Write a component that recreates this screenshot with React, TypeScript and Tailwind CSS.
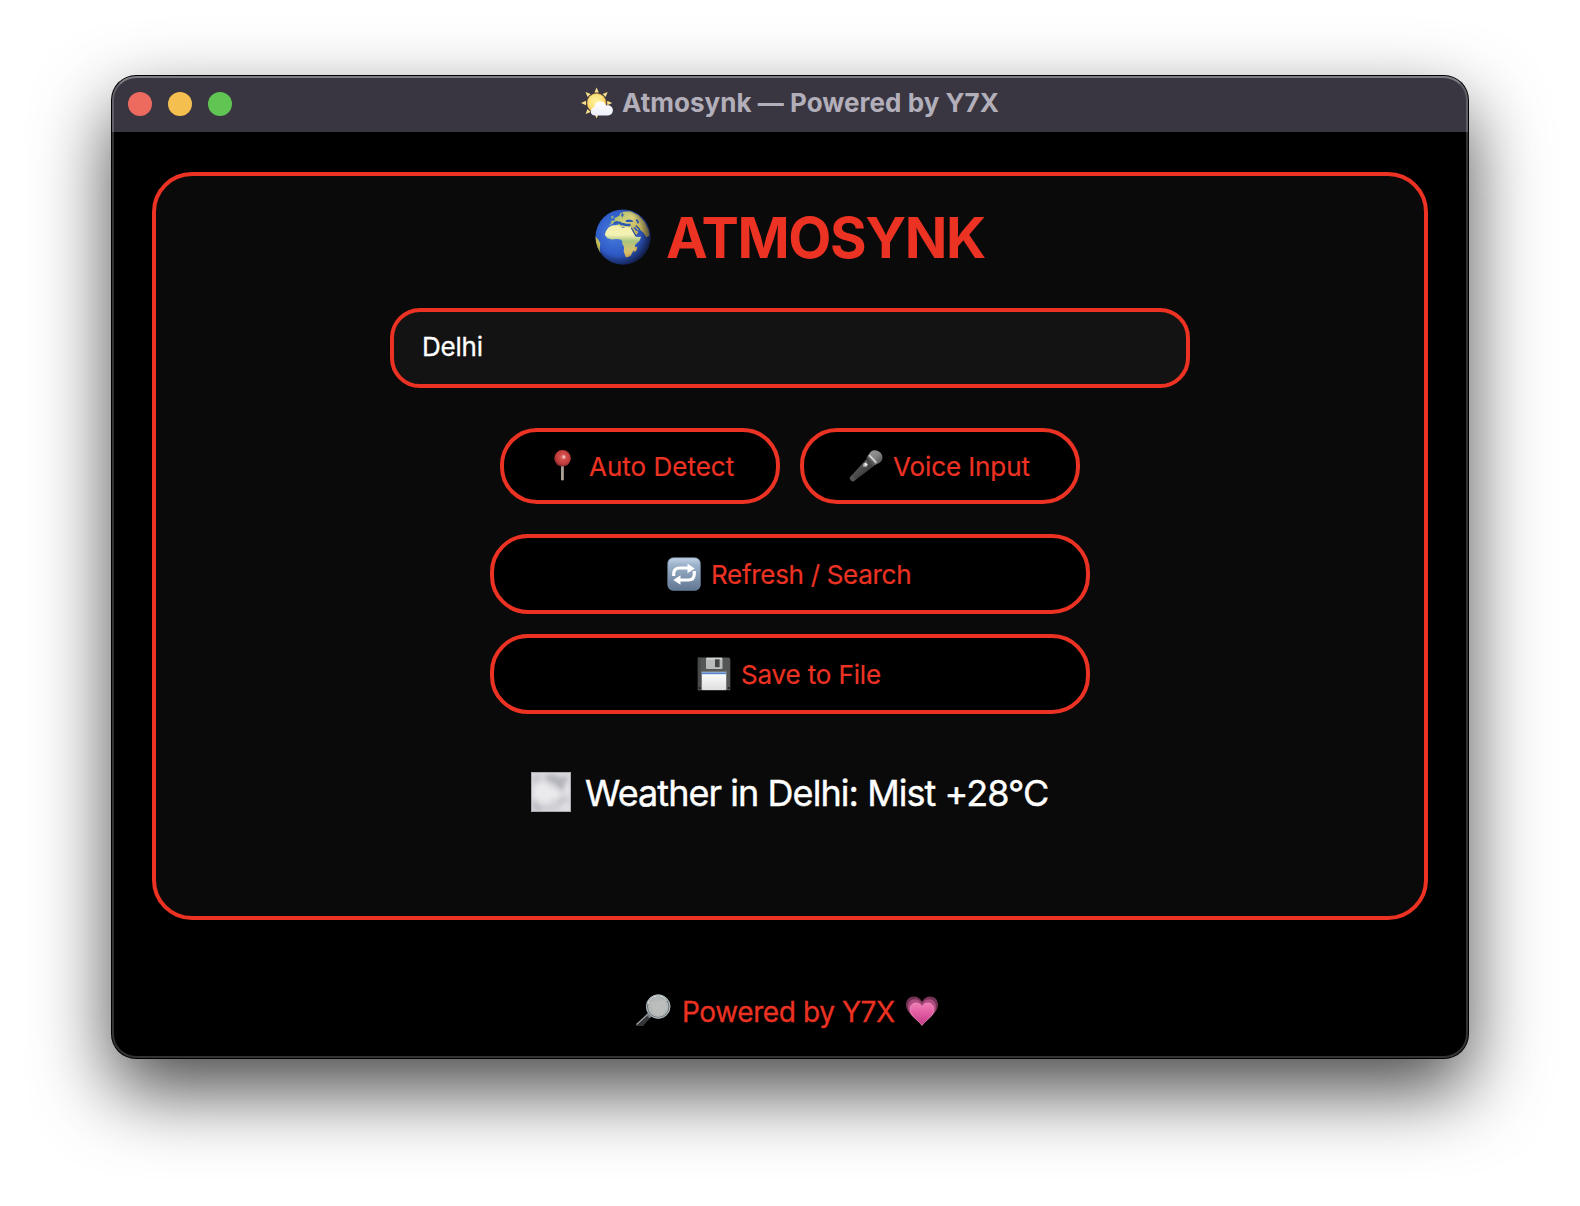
import React from "react";

function SunCloud() {
  return (
    <svg className="block h-[32px] w-[32px] shrink-0" viewBox="0 0 32 32">
      <defs>
        <radialGradient id="sun" cx=".45" cy=".4" r=".6">
          <stop offset="0" stopColor="#fff3a0" />
          <stop offset=".7" stopColor="#fbdf74" />
          <stop offset="1" stopColor="#f2b84c" />
        </radialGradient>
        <linearGradient id="cloud" x1="0" y1="0" x2="0" y2="1">
          <stop offset="0" stopColor="#ffffff" />
          <stop offset="1" stopColor="#eceffa" />
        </linearGradient>
      </defs>
      <g fill="#fae08a">
        {[0, 45, 90, 135, 180, 225, 270, 315].map((a) => (
          <path key={a} d="M15.6 .4 L17.8 5.400 L13.4 5.400 Z" transform={`rotate(${a} 15.6 16)`} />
        ))}
      </g>
      <circle cx="15.6" cy="16" r="9.500" fill="url(#sun)" stroke="#d99a35" strokeWidth=".5" />
      <path d="M14.2 28.4c-2.600 0-4.400-1.600-4.400-4 0-2.200 1.500-3.800 3.500-4.100.3-3.800 2.800-6 5.900-6 2.900 0 5 1.800 5.800 4.300.5-.2 1-.3 1.500-.3 3 0 5.400 2.100 5.400 4.900 0 3-2.100 5.200-5 5.200z" fill="url(#cloud)" />
    </svg>
  );
}

function Globe() {
  return (
    <svg className="block h-[56px] w-[56px] shrink-0" viewBox="0 0 56 56">
      <defs>
        <radialGradient id="sea" cx=".36" cy=".42" r=".68">
          <stop offset="0" stopColor="#4a80de" />
          <stop offset=".55" stopColor="#2f5bc8" />
          <stop offset=".85" stopColor="#26469e" />
          <stop offset="1" stopColor="#1c2d5c" />
        </radialGradient>
        <linearGradient id="africa" x1="0" y1="0" x2="0" y2="1">
          <stop offset="0" stopColor="#f3efaa" />
          <stop offset=".3" stopColor="#f4f2b4" />
          <stop offset=".5" stopColor="#aac47e" />
          <stop offset=".75" stopColor="#cfc272" />
          <stop offset="1" stopColor="#e2b258" />
        </linearGradient>
        <linearGradient id="eurasia" x1="0" y1="0" x2="1" y2=".6">
          <stop offset="0" stopColor="#92b468" />
          <stop offset=".5" stopColor="#d8d27a" />
          <stop offset="1" stopColor="#b9a34c" />
        </linearGradient>
        <radialGradient id="shade" cx=".42" cy=".44" r=".58">
          <stop offset=".7" stopColor="#0a1233" stopOpacity="0" />
          <stop offset="1" stopColor="#0a1233" stopOpacity=".6" />
        </radialGradient>
        <clipPath id="disc"><circle cx="28" cy="28" r="27.5" /></clipPath>
      </defs>
      <circle cx="28" cy="28" r="27.500" fill="url(#sea)" />
      <g clipPath="url(#disc)">
        <path fill="url(#eurasia)" d="M16 15.500l.3-3.700 3.700-.3-.5-2.500 3-1.200 2-1.300.5-2 3.500-1.800 7-.5 8 4 6 6.500 4 8 1 6-3 1.500-3.500-5-3.500-3-2 1-1.500-2.500-3-.8 2.500 3.300 3 1.500-1.800 3-4.700 2.500-1.700-2.500-3.300-5.500-.8-2-6-.3-2.500-1.500 1-1.700-3-.7-2.500 1-2.500-.8-1.700 2.300z" />
        <path fill="url(#africa)" d="M11 22l2.500-3.500 3.500-2 6.500-.5 1.500 1.700 3.200 1.200 2.300-1 6 .7 2.500 5 2.500 4.500 4.500-.4-1.200 3.700-4.800 4.600.2 4-2.600 2.900-1.700 3.600-3 1.800-2.200-.3-2-5.800.4-4.200-2-3.500.3-2.300-2-1.700-3.700-.5-5 .6-4.500-1.500-2.400-3.300z" />
        <path d="M18.500 14.700l3-1.500 3.500.6 1 1 4.500.9 5 .3" fill="none" stroke="#2c57b4" strokeWidth="2.400" />
        <path fill="#2f58b2" d="M30.500 11.500l2.500-.9 4 .5 1.500 1.600-3 .4-4.500-.1zM40.500 10.700l2-.5 1.600 3-1.200 1.800z" />
        <path d="M36.300 18.700l4.700 8.500M40.800 16.500l4 4" stroke="#294c99" strokeWidth="1.300" fill="none" />
        <path fill="#3560b8" d="M26 6l1.500-2.500 1.200 2.500-1.500 2.500z" />
        <path fill="#d7b752" d="M42.300 37.500l-.6 3.500-2.200 2.200-.7-2.200 1.400-2.700z" />
        <path fill="#c8c052" d="M0 27l3.500 4 1.800 3.500-.5 4.500.5 6L1 41z" />
        <path fill="#9db873" d="M16 8l1.500-1.500 1.200 1-1.500 2.500z" />
      </g>
      <circle cx="28" cy="28" r="27.5" fill="url(#shade)" />
    </svg>
  );
}

function Pin() {
  return (
    <svg className="block h-[34px] w-[34px] shrink-0" viewBox="0 0 34 34">
      <defs>
        <radialGradient id="pinHead" cx=".55" cy=".42" r=".55">
          <stop offset="0" stopColor="#ee9890" />
          <stop offset=".35" stopColor="#cf4c4a" />
          <stop offset=".8" stopColor="#bd3b3a" />
          <stop offset="1" stopColor="#832a2a" />
        </radialGradient>
      </defs>
      <rect x="15" y="16" width="3" height="15.500" rx="1.200" fill="#8f847c" />
      <rect x="15.600" y="16" width="1" height="15" fill="#c4bbb4" />
      <circle cx="16.500" cy="9.300" r="8.300" fill="url(#pinHead)" />
      <circle cx="18" cy="8" r="1.400" fill="#fbd6d0" opacity=".7" />
    </svg>
  );
}

function Mic() {
  return (
    <svg className="block h-[34px] w-[34px] shrink-0" viewBox="0 0 34 34">
      <defs>
        <linearGradient id="micHead" x1="0" y1="0" x2="1" y2="1">
          <stop offset="0" stopColor="#9a9a9a" />
          <stop offset=".5" stopColor="#858585" />
          <stop offset="1" stopColor="#4c4c4c" />
        </linearGradient>
        <linearGradient id="micBody" x1="0" y1="0" x2="1" y2="1">
          <stop offset="0" stopColor="#747474" />
          <stop offset=".5" stopColor="#4a4a4a" />
          <stop offset="1" stopColor="#222222" />
        </linearGradient>
      </defs>
      <path d="M17.500 10L.8 28.500c-.5 1.500 1.800 4.300 4 3.800L25 17z" fill="url(#micBody)" />
      <path d="M.9 28.600c-.6 1.600 1.900 4.400 3.900 3.700l2-1.700-4-4.300z" fill="#555" />
      <path d="M19.500 6.500c1.500-5 6-6.500 10-4.300 4.500 2.600 5 7.300 2.500 10.300-1.500 1.800-3.800 2.600-5.500 2.300z" fill="url(#micHead)" />
      <path d="M18.300 7.300l1.500-2L28.600 14l-2.400 2.300z" fill="#7d7d7d" />
      <path d="M20.300 6.300l7 7.200" stroke="#dedede" strokeWidth="1.600" />
      <path d="M17.300 9l1.300-1.800 7.600 8.600-2 1.500z" fill="#555" />
      <path d="M14.500 14.500l2.600-1.200 1.800 2.500-1.700 2.300-3.200-.7z" fill="#b9b9b9" />
      <path d="M16 14.500l1.700 1.600" stroke="#fff" strokeWidth="1.400" />
    </svg>
  );
}

function Repeat() {
  return (
    <svg className="block h-[34px] w-[34px] shrink-0" viewBox="0 0 34 34">
      <defs>
        <linearGradient id="tile" x1="0" y1="0" x2="0" y2="1">
          <stop offset="0" stopColor="#c3d3e6" />
          <stop offset=".2" stopColor="#9fb4cc" />
          <stop offset="1" stopColor="#617692" />
        </linearGradient>
      </defs>
      <rect x=".8" y=".8" width="32.500" height="32.500" rx="5.500" fill="url(#tile)" stroke="#7c93b0" strokeWidth=".7" />
      <path d="M6.700 19V17q0-6 6-6H22" fill="none" stroke="#fff" strokeWidth="3.100" />
      <path d="M20.500 6.800l7.300 4.600-7.300 4.800z" fill="#fff" />
      <path d="M27.300 14V17q0 6-6 6H13" fill="none" stroke="#fff" strokeWidth="3.100" />
      <path d="M13.500 18.200L6.300 23l7.200 4.800z" fill="#fff" />
    </svg>
  );
}

function Floppy() {
  return (
    <svg className="block h-[34px] w-[34px] shrink-0" viewBox="0 0 34 34">
      <defs>
        <linearGradient id="label" x1="0" y1="0" x2="0" y2="1">
          <stop offset="0" stopColor="#ffffff" />
          <stop offset="1" stopColor="#dedede" />
        </linearGradient>
      </defs>
      <path d="M.8.600H32l1.300 1.300v31.400H.8z" fill="#555656" />
      <path d="M.8.600h3v32.700h-3z" fill="#48494a" />
      <rect x="9" y=".8" width="16.500" height="11.300" rx="1" fill="#b9baba" />
      <rect x="9.500" y=".8" width="15.500" height="1.800" fill="#d2d3d3" />
      <rect x="18" y="2.300" width="4.600" height="7.800" fill="#444546" />
      <rect x="4" y="14" width="26" height="19.300" rx="1.300" fill="#77797b" />
      <rect x="5" y="15" width="24" height="18" rx=".8" fill="url(#label)" />
      <rect x="5" y="15.300" width="24" height="1.900" fill="#5583c8" />
      <path d="M1.700 30h1.600v2H1.700zM30.800 30h1.600v2h-1.600z" fill="#222" />
    </svg>
  );
}

function Mist() {
  return (
    <svg className="block h-[40px] w-[40px] shrink-0" viewBox="0 0 40 40">
      <defs>
        <filter id="soft" x="-30%" y="-30%" width="160%" height="160%"><feGaussianBlur stdDeviation="2" /></filter>
        <clipPath id="mistBox"><rect width="40" height="40" /></clipPath>
      </defs>
      <g clipPath="url(#mistBox)">
        <rect width="40" height="40" fill="#d9d9dd" />
        <g filter="url(#soft)">
          <path d="M14 3l10 0 6 3 5-2 2 3-4 5 1 6-5-1-5-5-5-2-4-3z" fill="#b4b4bc" />
          <path d="M1 5l5-3 5 3-3 4-7 2z" fill="#c9c9d0" />
          <path d="M2 17l5-5 7-1 6 5 8 3 0 7-8 1-4 5-7-3-6-5z" fill="#eaeaed" />
          <path d="M1 28l5 3 4 4 4-1-2 5H2z" fill="#bebec6" />
          <path d="M25 30l4-4 4 0 3-2 1 4-6 3-3 4z" fill="#c6c6cd" />
          <path d="M15 33l4 1 6-1 2 5H15z" fill="#cacad0" />
          <path d="M34 12l4 3v8l-4-3z" fill="#e8e8eb" />
          <path d="M31 35l5-3 3 5h-7z" fill="#e4e4e8" />
        </g>
        <rect x=".5" y=".5" width="39" height="39" fill="none" stroke="#8e8e96" opacity=".6" />
      </g>
    </svg>
  );
}

function Magnifier() {
  return (
    <svg className="block h-[32px] w-[36px] shrink-0" viewBox="0 0 36 32">
      <path d="M12.500 20L1 30.500V32H8l8-9z" fill="#33373a" />
      <path d="M12.500 20.500L1.500 30.600" stroke="#9b9fa3" strokeWidth="1.300" />
      <path d="M14.500 17l-3.500 3.800 3.600 3.400 3.900-3.500z" fill="#777c80" />
      <circle cx="23.200" cy="12.700" r="11.200" fill="#b4b7b7" stroke="#6f777b" strokeWidth="2" />
      <circle cx="23.200" cy="12.500" r="11.700" fill="none" stroke="#b5bcc0" strokeWidth="1" />
      <path d="M13 9.800a10.500 10.500 0 0 1 19-3" fill="none" stroke="#e6eaeb" strokeWidth="1" />
      <path d="M14 8.500l16-3 2 8-5 7-6 1z" fill="#c1c2c2" opacity=".5" />
    </svg>
  );
}

function Heart() {
  const d = "M17 30C12 23 1 19 1 9.500 1 4.500 4.500 1.500 9 1.500c3.500 0 6.500 2 8 5 1.500-3 4.500-5 8-5 4.500 0 8 3 8 8C33 19 22 23 17 30z";
  return (
    <svg className="block h-[32px] w-[34px] shrink-0" viewBox="0 0 34 32">
      <defs>
        <linearGradient id="heart" x1="0" y1="0" x2="0" y2="1">
          <stop offset="0" stopColor="#f07fb6" />
          <stop offset=".4" stopColor="#e45fa5" />
          <stop offset="1" stopColor="#c13a86" />
        </linearGradient>
      </defs>
      <path d={d} fill="#743353" transform="translate(0 1)" />
      <path d={d} fill="#b04c82" transform="translate(2.200 4) scale(.87 .91)" />
      <path d={d} fill="url(#heart)" stroke="#f29ac5" strokeWidth=".8" transform="translate(4.400 7.800) scale(.74 .79)" />
    </svg>
  );
}

const pill = "flex items-center border-4 border-[#eb3223] bg-black text-[26px] leading-8 text-[#eb3223] whitespace-pre [-webkit-text-stroke:0.2px]";

export default function App() {
  return (
    <div className="flex h-[1206px] w-[1580px] justify-center overflow-hidden bg-white pt-[76px] font-['Inter',sans-serif]">
      <main className="relative flex h-[982px] w-[1356px] flex-col overflow-visible rounded-[24px] bg-black shadow-[0_0_0_1px_#000,0_32px_76px_rgba(0,0,0,0.72)]">
        <header className="flex h-[56px] shrink-0 items-center rounded-t-[24px] bg-[#393641] pl-4">
          <div className="flex w-[104px] gap-4">
            <span className="size-6 rounded-full bg-[#ed6a5f]" />
            <span className="size-6 rounded-full bg-[#f5bf4f]" />
            <span className="size-6 rounded-full bg-[#61c554]" />
          </div>
          <div className="mb-[2px] ml-[349px] flex items-center">
            <SunCloud />
            <h1 className="ml-[9px] whitespace-pre text-[26px] leading-8 font-bold tracking-[0.03px] text-[#b2afba]">Atmosynk — Powered by Y7X</h1>
          </div>
        </header>

        <section className="mx-10 mt-10 flex h-[748px] shrink-0 flex-col rounded-[40px] border-4 border-[#eb3223] bg-[#0a0a0a]">
          <div className="mt-[31px] flex h-[60px] items-center pl-[439px]">
            <Globe />
            <h2 className="ml-[15px] pt-[2px] text-[56px] leading-[60px] font-bold tracking-[-1.4px] text-[#eb3223]">ATMOSYNK</h2>
          </div>
          <input
            className="mx-auto mt-[41px] block h-20 w-[800px] rounded-[30px] border-4 border-[#eb3223] bg-[#131313] pb-1 pl-7 text-[26px] tracking-[-0.2px] text-white outline-none [-webkit-text-stroke:0.3px]"
            defaultValue="Delhi"
          />
          <div className="mt-10 flex justify-center gap-5">
            <button className={`${pill} h-[76px] w-[280px] rounded-[37px] pl-[42px]`}>
              <Pin />
              <span className="ml-[9px] pt-[2px]">Auto Detect</span>
            </button>
            <button className={`${pill} h-[76px] w-[280px] rounded-[37px] pl-[45px]`}>
              <Mic />
              <span className="ml-[10px] pt-[2px] tracking-[-0.1px]">Voice Input</span>
            </button>
          </div>
          <div className="mt-[30px] flex flex-col items-center gap-5">
            <button className={`${pill} h-20 w-[600px] rounded-[38px] pl-[173px]`}>
              <Repeat />
              <span className="ml-[10px] pt-[2px] tracking-[-0.3px]">Refresh / Search</span>
            </button>
            <button className={`${pill} h-20 w-[600px] rounded-[38px] pl-[203px]`}>
              <Floppy />
              <span className="ml-[10px] pt-[2px] tracking-[-0.15px]">Save to File</span>
            </button>
          </div>
          <div className="mt-[54px] flex h-12 items-center pl-[375px]">
            <Mist />
            <p className="ml-[14px] whitespace-pre pt-[2px] text-[36px] leading-[48px] tracking-[-0.95px] text-white [-webkit-text-stroke:0.4px]">Weather in Delhi: Mist +28°C</p>
          </div>
        </section>

        <footer className="mt-[74px] flex h-[32px] items-center pl-[523px] text-[28px] leading-8 text-[#eb3223]">
          <Magnifier />
          <p className="ml-[11px] w-[223px] whitespace-pre pt-[4px] tracking-[-0.4px] [-webkit-text-stroke:0.3px]">Powered by Y7X</p>
          <Heart />
        </footer>

        <div className="pointer-events-none absolute inset-0 rounded-[24px] border-2 border-white/20 border-t-white/35" />
      </main>
    </div>
  );
}
